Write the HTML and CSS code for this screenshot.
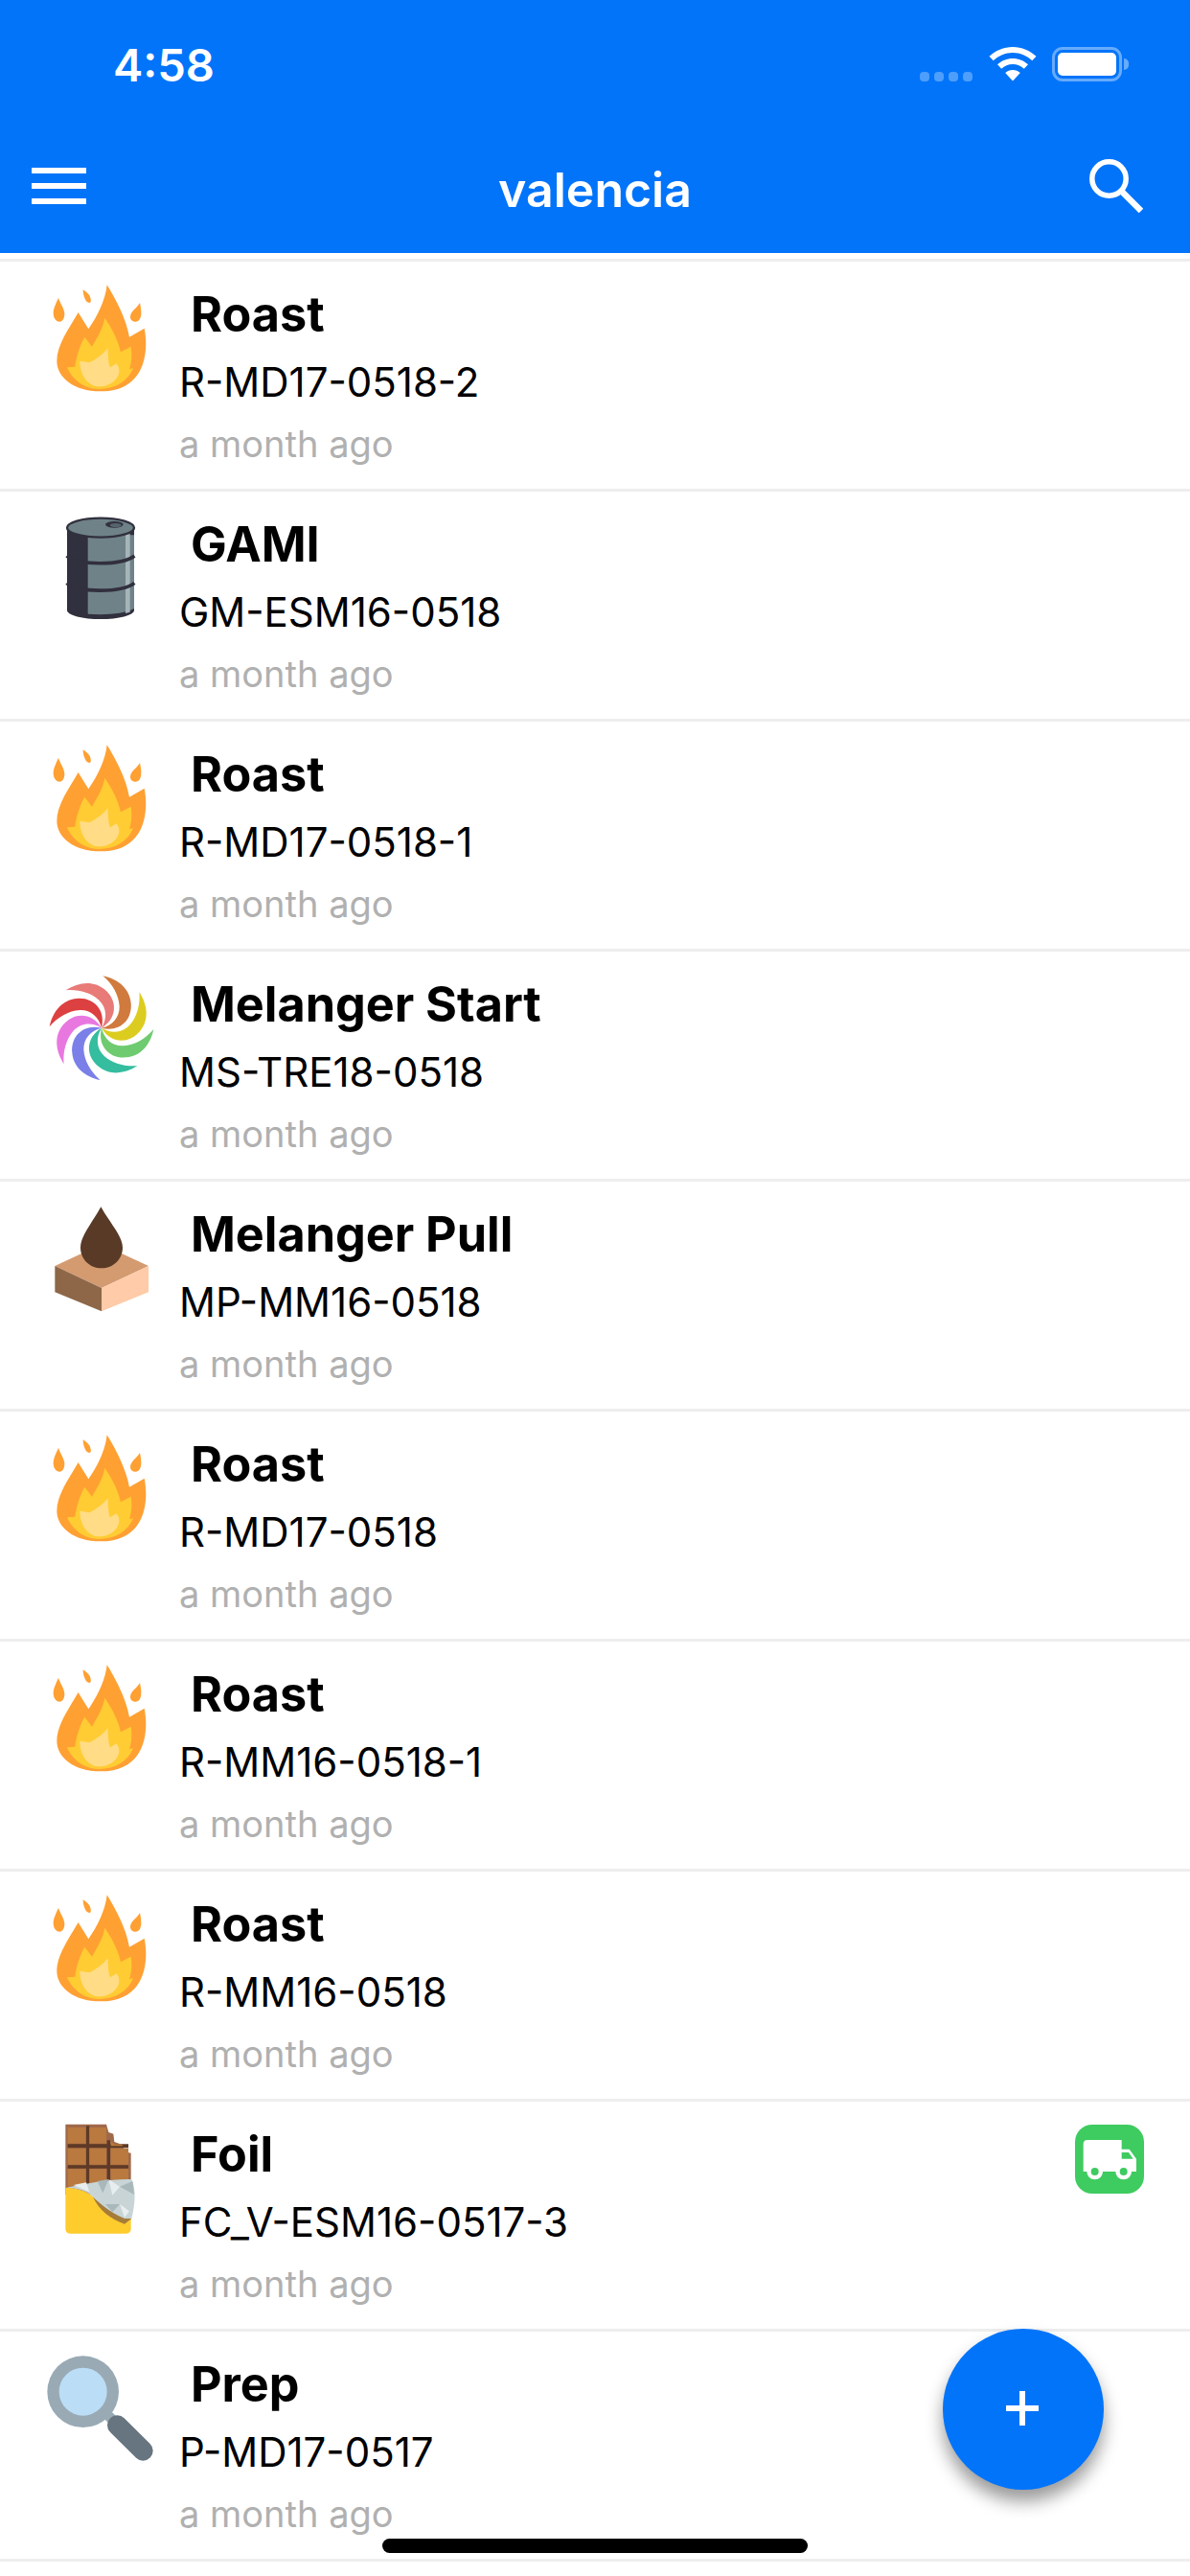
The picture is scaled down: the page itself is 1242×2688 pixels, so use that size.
FILE: index.html
```html
<!DOCTYPE html>
<html lang="en">
<head>
  <meta charset="UTF-8">
  <meta name="viewport" content="width=device-width, initial-scale=1.0">
  <title>valencia</title>
  <link rel="stylesheet" href="styles.css">
</head>
<body>
  <svg class="defs" width="0" height="0">
    <symbol id="fire" viewBox="0 0 420 420">
      <path fill="#ffa033" d="M245 52C275 100 305 160 315 215L362 188C375 250 372 385 225 385C140 385 88 340 88 290C88 240 125 190 155 138L187 190C215 150 240 100 245 52Z"/>
      <path fill="#ffa033" d="M93 92C85 110 77 125 77 140C77 158 88 167 97 167C106 167 112 155 112 143C112 125 98 110 93 92ZM170 67C170 85 178 108 190 108C197 108 195 95 190 85C185 78 178 72 170 67ZM348 108C338 125 318 135 318 152C318 162 326 167 335 167C345 167 352 155 352 140C352 128 350 118 348 108Z"/>
      <path fill="#ffcc33" d="M238 155C262 190 280 225 288 262L320 245C325 280 320 300 315 315L327 313C310 355 270 378 220 378C170 378 135 345 120 310L145 308C148 280 160 240 175 215L198 245C215 215 232 190 238 155Z"/>
      <path fill="#ffdc85" d="M248 250C248 275 250 300 255 310L275 298C288 315 285 335 270 350C255 365 235 370 220 370C190 370 160 340 160 290L190 295C210 285 232 270 248 250Z"/>
    </symbol>

    <symbol id="barrel" viewBox="0 0 420 420">
      <path fill="#31303e" d="M120 92H330V350C330 366 280 378 225 378C170 378 120 366 120 350Z"/>
      <path fill="#6f8288" d="M185 115H330V345C300 362 240 366 185 362Z"/>
      <path fill="#a6b5b9" d="M303 110H317V356L303 360Z"/>
      <ellipse cx="225" cy="92" rx="105" ry="30" fill="#6f8288" stroke="#31303e" stroke-width="7"/>
      <ellipse cx="268" cy="82" rx="28" ry="10" fill="#31303e"/>
      <ellipse cx="272" cy="84" rx="18" ry="6" fill="#56656b"/>
      <path fill="none" stroke="#31303e" stroke-width="11" d="M119 180C150 210 290 212 331 180M119 265C150 295 290 297 331 265"/>
    </symbol>

    <symbol id="swirl" viewBox="0 0 420 420">
      <path fill="#d07a3e" d="M228 218C282 232 325 195 320 140C316 95 280 65 232 55C262 80 282 115 284 150C285 185 262 210 228 218Z"/>
      <path fill="#dccc1f" transform="rotate(45 228 218)" d="M228 218C282 232 325 195 320 140C316 95 280 65 232 55C262 80 282 115 284 150C285 185 262 210 228 218Z"/>
      <path fill="#6fcb70" transform="rotate(90 228 218)" d="M228 218C282 232 325 195 320 140C316 95 280 65 232 55C262 80 282 115 284 150C285 185 262 210 228 218Z"/>
      <path fill="#34bd9f" transform="rotate(135 228 218)" d="M228 218C282 232 325 195 320 140C316 95 280 65 232 55C262 80 282 115 284 150C285 185 262 210 228 218Z"/>
      <path fill="#7a80e8" transform="rotate(180 228 218)" d="M228 218C282 232 325 195 320 140C316 95 280 65 232 55C262 80 282 115 284 150C285 185 262 210 228 218Z"/>
      <path fill="#e878e0" transform="rotate(225 228 218)" d="M228 218C282 232 325 195 320 140C316 95 280 65 232 55C262 80 282 115 284 150C285 185 262 210 228 218Z"/>
      <path fill="#dc4040" transform="rotate(270 228 218)" d="M228 218C282 232 325 195 320 140C316 95 280 65 232 55C262 80 282 115 284 150C285 185 262 210 228 218Z"/>
      <path fill="#e87a78" transform="rotate(315 228 218)" d="M228 218C282 232 325 195 320 140C316 95 280 65 232 55C262 80 282 115 284 150C285 185 262 210 228 218Z"/>
    </symbol>

    <symbol id="melt" viewBox="0 0 420 420">
      <path fill="#d49a70" d="M82 243L228 175L375 243L228 312Z"/>
      <path fill="#8d6748" d="M82 243L228 312V385L82 325Z"/>
      <path fill="#ffcba8" d="M375 243L228 312V385L375 325Z"/>
      <path fill="#583a26" d="M226 58C200 105 162 150 162 185C162 222 192 250 228 250C264 250 294 222 294 185C294 150 252 105 226 58Z"/>
    </symbol>

    <symbol id="chocolate" viewBox="0 0 420 420">
      <path fill="#a0694a" d="M115 50H243L250 75L265 80L268 105L295 115L300 135L320 140V270H115Z"/>
      <g fill="#5e3a26">
        <path d="M180 55H190V250H180ZM245 100H255V250H245ZM122 112H312V124H122ZM122 178H312V188H122Z"/>
      </g>
      <g fill="#b9793f">
        <path d="M122 60H178V110H122ZM190 60H243V110H190ZM122 125H178V176H122ZM190 125H243V176H190ZM257 125H312V176H257ZM122 190H178V245H122ZM190 190H243V245H190ZM257 190H312V245H257Z"/>
        <path d="M257 105L268 112H290L295 118H257Z"/>
      </g>
      <path fill="#ffcc2e" d="M115 248C180 250 205 275 225 305C245 330 285 345 320 345V378C320 386 314 392 306 392H128C120 392 115 386 115 378Z"/>
      <path fill="#a67c3a" d="M200 275C225 300 265 330 322 345L300 362C255 345 220 320 200 275Z"/>
      <path fill="#c8d4d6" d="M118 248C180 235 260 220 322 222C335 250 335 290 322 345H300C250 325 215 290 200 275C175 255 150 250 118 248Z"/>
      <path fill="#e8eeef" d="M140 240L180 232L190 262ZM250 222L285 245L262 272ZM285 300L315 322L300 342Z"/>
      <path fill="#a9b8bb" d="M215 228L250 222L232 265ZM285 245L325 228L330 270ZM240 300L285 300L262 325Z"/>
    </symbol>

    <symbol id="magnifier" viewBox="0 0 420 420">
      <path stroke="#99aab5" stroke-width="32" d="M170 167L270 262"/>
      <path stroke="#66757f" stroke-width="62" stroke-linecap="round" d="M277 272L358 352"/>
      <circle cx="170" cy="167" r="112" fill="#99aab5"/>
      <circle cx="170" cy="167" r="75" fill="#bbddf5"/>
    </symbol>
  </svg>

  <header class="app-header">
    <div class="status-bar">
      <span class="clock">4:58</span>
      <div class="status-icons">
        <span class="signal"><i></i><i></i><i></i><i></i></span>
        <svg class="wifi" viewBox="0 0 50 36">
          <path fill="#fff" d="M25 0C34.500 0 43 3.800 49.500 9.800L45.300 14.200C39.800 9.200 32.800 6 25 6C17.200 6 10.200 9.200 4.700 14.200L.5 9.800C7 3.800 15.500 0 25 0Z"/>
          <path fill="#fff" d="M25 12C31.200 12 36.800 14.400 41 18.300L36.800 22.700C33.600 19.800 29.500 18 25 18C20.500 18 16.400 19.800 13.200 22.700L9 18.300C13.200 14.400 18.800 12 25 12Z"/>
          <path fill="#fff" d="M25 24C28 24 30.700 25.100 32.800 27L25 35.500L17.200 27C19.300 25.100 22 24 25 24Z"/>
        </svg>
        <span class="battery"><span class="battery-level"></span></span>
      </div>
    </div>
    <div class="toolbar">
      <span class="menu-icon"><i></i><i></i><i></i></span>
      <h1 class="toolbar-title">valencia</h1>
      <svg class="search-icon" viewBox="0 0 56 56">
        <circle cx="20.500" cy="20.500" r="17.700" fill="none" stroke="#fff" stroke-width="5.500"/>
        <path stroke="#fff" stroke-width="6.500" d="M33 33L54 54"/>
      </svg>
    </div>
  </header>

  <main class="batch-list">
    <div class="batch-row">
      <svg class="batch-icon"><use href="#fire"/></svg>
      <div class="batch-text">
        <div class="batch-name">Roast</div>
        <div class="batch-code">R-MD17-0518-2</div>
        <div class="batch-time">a month ago</div>
      </div>
    </div>
    <div class="batch-row">
      <svg class="batch-icon"><use href="#barrel"/></svg>
      <div class="batch-text">
        <div class="batch-name">GAMI</div>
        <div class="batch-code">GM-ESM16-0518</div>
        <div class="batch-time">a month ago</div>
      </div>
    </div>
    <div class="batch-row">
      <svg class="batch-icon"><use href="#fire"/></svg>
      <div class="batch-text">
        <div class="batch-name">Roast</div>
        <div class="batch-code">R-MD17-0518-1</div>
        <div class="batch-time">a month ago</div>
      </div>
    </div>
    <div class="batch-row">
      <svg class="batch-icon"><use href="#swirl"/></svg>
      <div class="batch-text">
        <div class="batch-name">Melanger Start</div>
        <div class="batch-code">MS-TRE18-0518</div>
        <div class="batch-time">a month ago</div>
      </div>
    </div>
    <div class="batch-row">
      <svg class="batch-icon"><use href="#melt"/></svg>
      <div class="batch-text">
        <div class="batch-name">Melanger Pull</div>
        <div class="batch-code">MP-MM16-0518</div>
        <div class="batch-time">a month ago</div>
      </div>
    </div>
    <div class="batch-row">
      <svg class="batch-icon"><use href="#fire"/></svg>
      <div class="batch-text">
        <div class="batch-name">Roast</div>
        <div class="batch-code">R-MD17-0518</div>
        <div class="batch-time">a month ago</div>
      </div>
    </div>
    <div class="batch-row">
      <svg class="batch-icon"><use href="#fire"/></svg>
      <div class="batch-text">
        <div class="batch-name">Roast</div>
        <div class="batch-code">R-MM16-0518-1</div>
        <div class="batch-time">a month ago</div>
      </div>
    </div>
    <div class="batch-row">
      <svg class="batch-icon"><use href="#fire"/></svg>
      <div class="batch-text">
        <div class="batch-name">Roast</div>
        <div class="batch-code">R-MM16-0518</div>
        <div class="batch-time">a month ago</div>
      </div>
    </div>
    <div class="batch-row">
      <svg class="batch-icon"><use href="#chocolate"/></svg>
      <div class="batch-text">
        <div class="batch-name">Foil</div>
        <div class="batch-code">FC_V-ESM16-0517-3</div>
        <div class="batch-time">a month ago</div>
      </div>
      <svg class="ship-badge" viewBox="486 81 216 216">
        <rect x="486" y="81" width="216" height="216" rx="54" fill="#3ecb60"/>
        <path fill="#fff" d="M512 141C512 134 517 129 524 129H632V158H656L678 188V228H512Z"/>
        <path fill="#3ecb60" d="M632 168H654L668 188H632Z"/>
        <circle cx="548" cy="228" r="25" fill="#fff"/>
        <circle cx="638" cy="228" r="25" fill="#fff"/>
        <circle cx="548" cy="228" r="12" fill="#3ecb60"/>
        <circle cx="638" cy="228" r="12" fill="#3ecb60"/>
      </svg>
    </div>
    <div class="batch-row">
      <svg class="batch-icon"><use href="#magnifier"/></svg>
      <div class="batch-text">
        <div class="batch-name">Prep</div>
        <div class="batch-code">P-MD17-0517</div>
        <div class="batch-time">a month ago</div>
      </div>
    </div>
  </main>

  <button class="add-button"><span class="add-plus"></span></button>
  <div class="home-indicator"></div>
</body>
</html>
```

FILE: styles.css
```css
html, body {
  margin: 0;
  padding: 0;
}

body {
  position: relative;
  width: 1242px;
  height: 2688px;
  overflow: hidden;
  background-color: #fff;
  font-family: Inter, "Liberation Sans", sans-serif;
  color: #000;
}

.defs {
  position: absolute;
}

/* Header */
.app-header {
  height: 264px;
  background-color: #0274fa;
  color: #fff;
}

.status-bar {
  display: flex;
  justify-content: space-between;
  height: 136px;
  padding: 44px 71px 0 118px;
  box-sizing: border-box;
}

.clock {
  font-size: 47px;
  font-weight: 600;
  line-height: 48px;
}

.status-icons {
  display: flex;
  align-items: flex-start;
  height: 40px;
  margin-top: 5px;
}

.signal {
  display: flex;
  gap: 5px;
  margin: 26px 17px 0 0;
}

.signal i {
  width: 10px;
  height: 10px;
  border-radius: 4px;
  background-color: rgba(255, 255, 255, 0.3);
}

.wifi {
  width: 50px;
  height: 36px;
  margin-right: 16px;
}

.battery {
  position: relative;
  width: 73px;
  height: 36px;
  padding: 3px;
  box-sizing: border-box;
  border: 3px solid rgba(255, 255, 255, 0.4);
  border-radius: 11px;
}

.battery::after {
  content: "";
  position: absolute;
  top: 9px;
  right: -10px;
  width: 5px;
  height: 12px;
  border-radius: 0 6px 6px 0;
  background-color: rgba(255, 255, 255, 0.4);
}

.battery-level {
  display: block;
  height: 100%;
  border-radius: 5px;
  background-color: #fff;
}

.toolbar {
  display: grid;
  grid-template-columns: 1fr auto 1fr;
  align-items: start;
  padding: 30px 33px 0;
}

.menu-icon {
  display: flex;
  flex-direction: column;
  gap: 10px;
  width: 57px;
  margin-top: 9px;
}

.menu-icon i {
  height: 6px;
  background-color: #fff;
}

.toolbar-title {
  margin: 2px 0 0;
  font-size: 50px;
  font-weight: 600;
  line-height: 60px;
}

.search-icon {
  justify-self: end;
  width: 56px;
  height: 56px;
  margin-right: 16px;
}

/* List */
.batch-list {
  padding-top: 6px;
  border-bottom: 3px solid #eee;
}

.batch-row {
  display: flex;
  align-items: flex-start;
  height: 240px;
  padding: 10px 48px 0 30px;
  box-sizing: border-box;
  border-top: 3px solid #eee;
}

.batch-icon {
  flex: none;
  width: 140px;
  height: 140px;
  margin-top: -3px;
}

.batch-text {
  flex: 1;
  padding: 15px 0 0 17px;
}

.batch-name {
  padding-left: 12px;
  font-size: 50.3px;
  font-weight: 700;
  line-height: 60px;
}

.batch-code {
  margin-top: 16px;
  font-size: 42px;
  line-height: 50px;
}

.batch-time {
  margin-top: 14px;
  font-size: 38px;
  line-height: 50px;
  color: #b0b0b0;
}

.ship-badge {
  flex: none;
  width: 72px;
  height: 72px;
  margin-top: 14px;
}

/* Floating */
.add-button {
  position: absolute;
  left: 984px;
  top: 2430px;
  width: 168px;
  height: 168px;
  padding: 0;
  border: none;
  border-radius: 50%;
  background-color: #0274fa;
  box-shadow: 0 12px 18px rgba(0, 0, 0, 0.4);
}

.add-plus {
  position: absolute;
  left: 66px;
  top: 65px;
  width: 34px;
  height: 36px;
  background:
    linear-gradient(#fff, #fff) center / 34px 6px no-repeat,
    linear-gradient(#fff, #fff) center / 6px 36px no-repeat;
}

.home-indicator {
  position: absolute;
  left: 399px;
  top: 2649px;
  width: 444px;
  height: 15px;
  border-radius: 8px;
  background-color: #000;
}
```
